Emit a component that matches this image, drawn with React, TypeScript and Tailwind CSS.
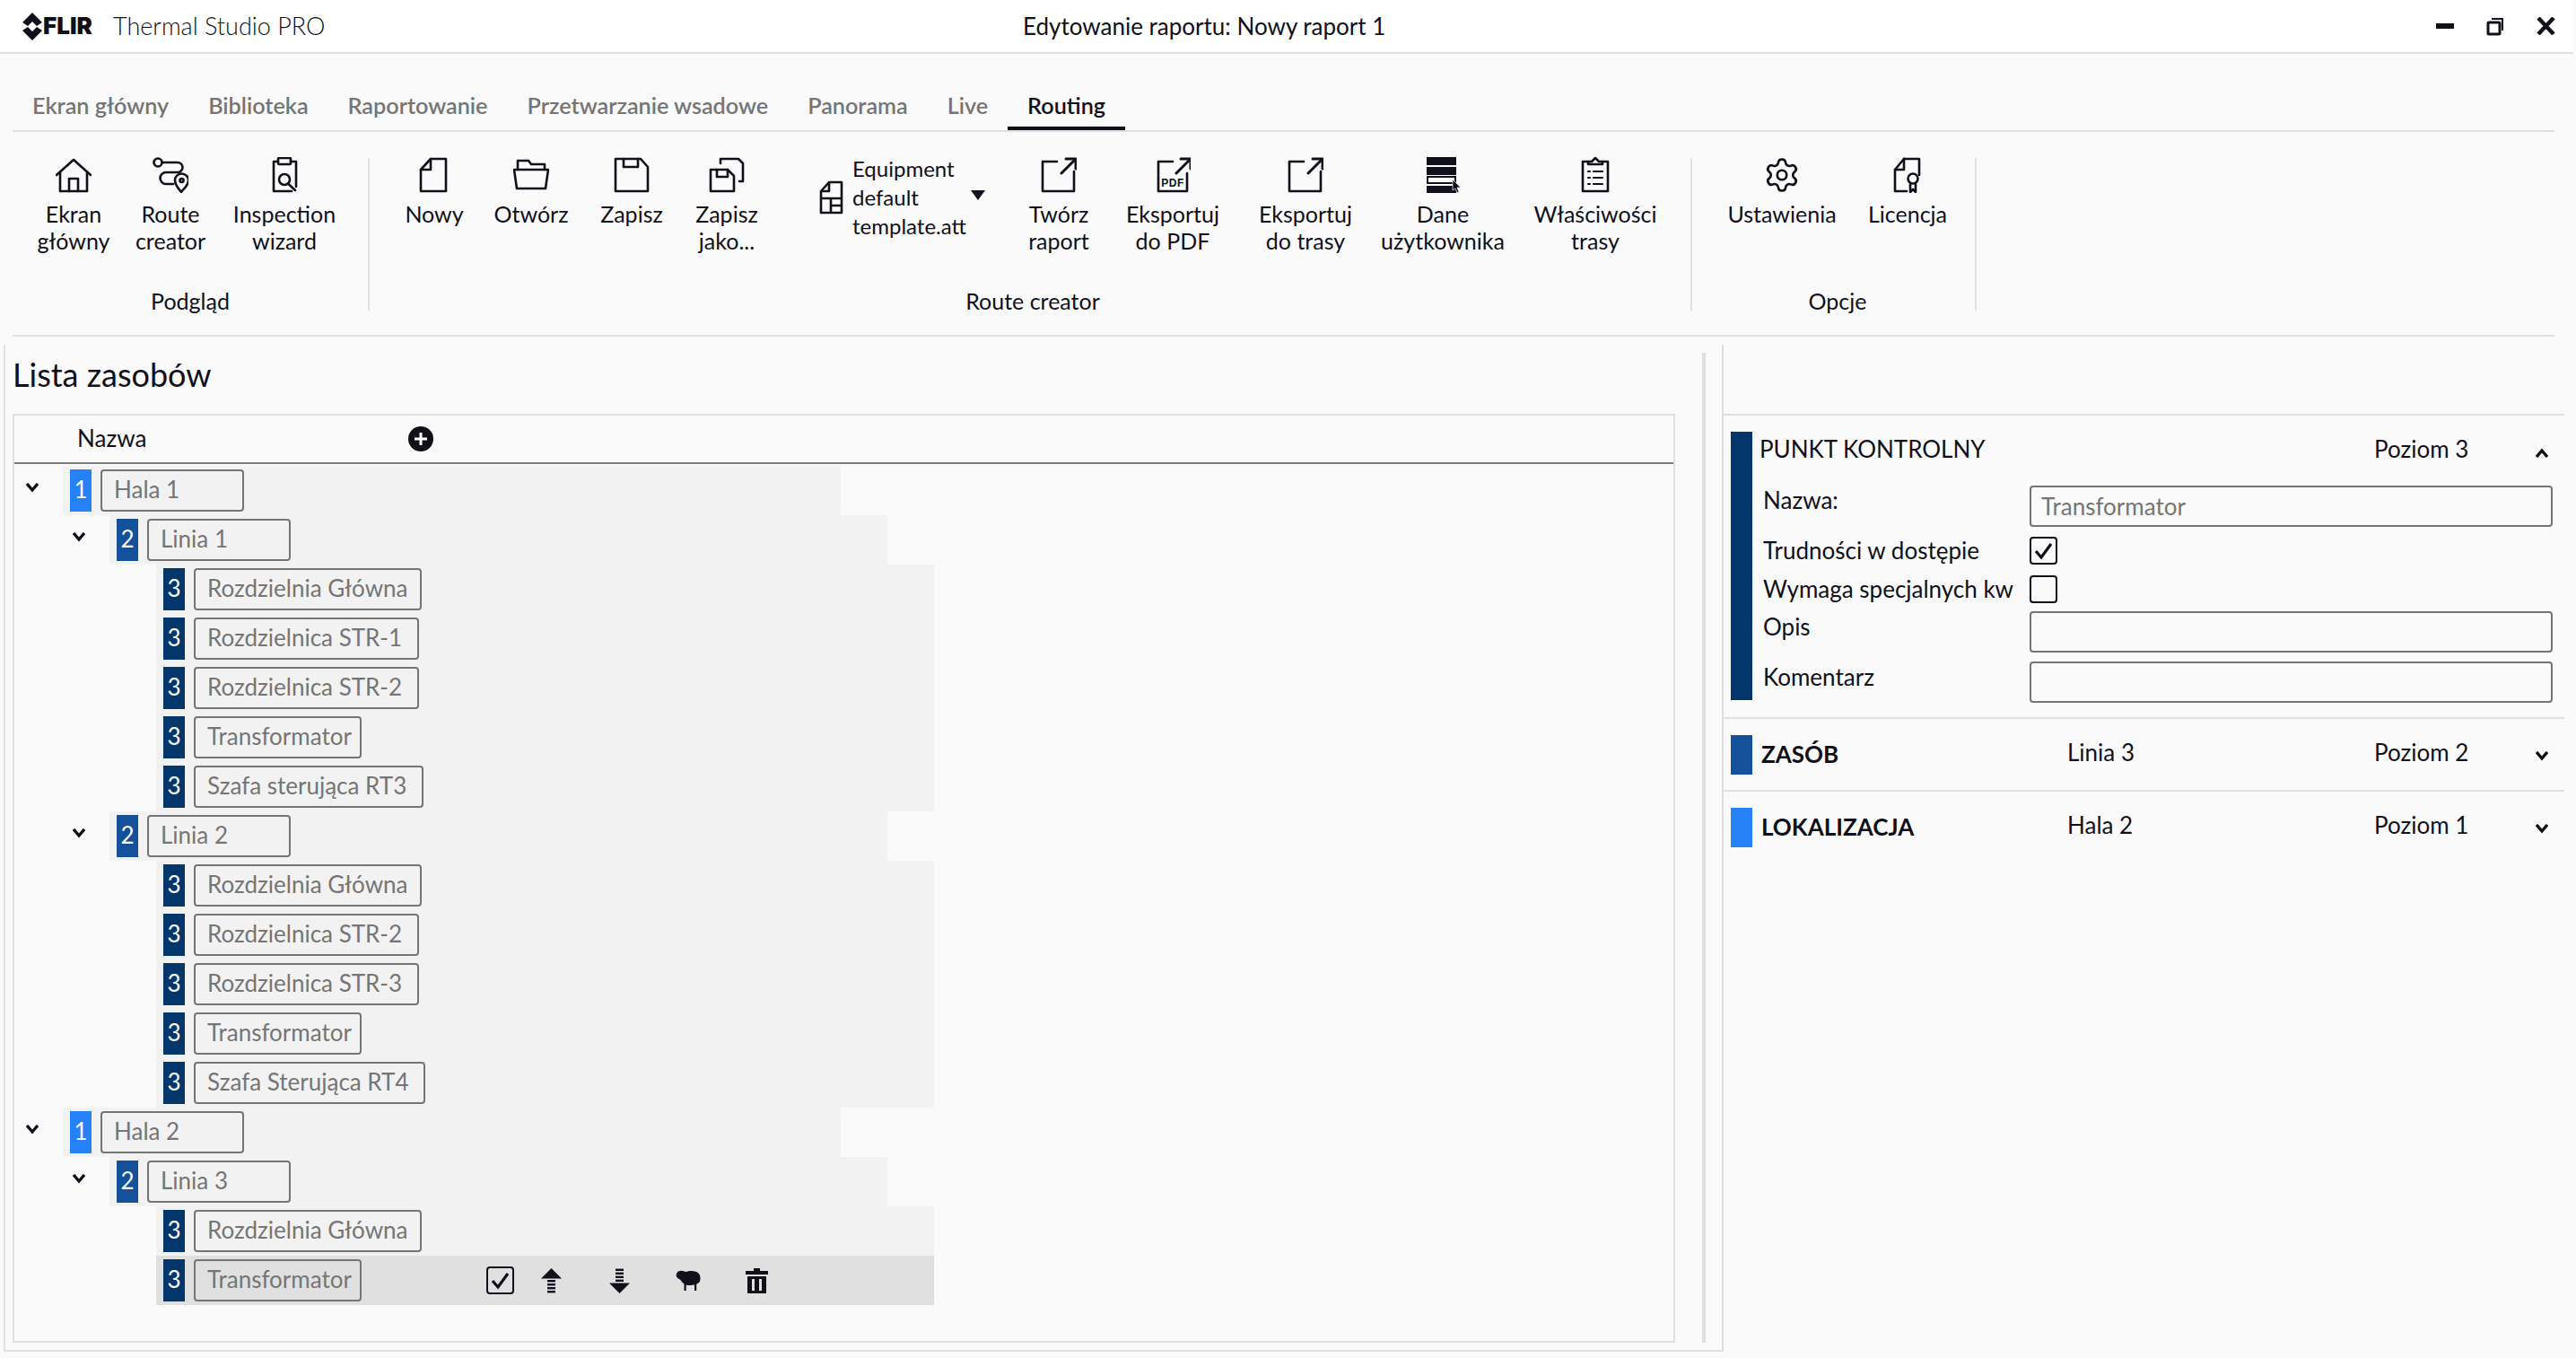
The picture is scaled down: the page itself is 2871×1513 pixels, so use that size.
import React from 'react';
import { Settings } from 'lucide-react';

const ink = '#10101a';

const Ico: React.FC<{ children: React.ReactNode }> = ({ children }) => (
  <svg width="40" height="40" viewBox="0 0 40 40" fill="none" stroke={ink} strokeWidth="2.6" strokeLinejoin="round" strokeLinecap="round" className="shrink-0">
    {children}
  </svg>
);

const HomeIcon = () => (
  <Ico>
    <path d="M1 20 L20 3 L39 20" />
    <path d="M5 17 V38 H35 V17" />
    <path d="M15 38 V24 H25 V38" />
  </Ico>
);

const RouteIcon = () => (
  <Ico>
    <circle cx="6" cy="6" r="4.5" />
    <path d="M11 6 H28 A5.5 5.5 0 0 1 28 17 H15 A6.5 6.5 0 0 0 15 30 H23" />
    <path d="M32 39 C28 34 25 31 25 26 A7.5 7.5 0 0 1 40 26 C40 31 36 34 32 39 Z" />
    <circle cx="32.5" cy="26" r="2" />
  </Ico>
);

const InspectIcon = () => (
  <Ico>
    <path d="M13 5 H8 V38 H28" />
    <path d="M27 5 H33 V33" />
    <rect x="13" y="1" width="14" height="7" rx="1" />
    <circle cx="20" cy="25" r="6" />
    <path d="M24.5 30 L32 37" />
  </Ico>
);

const NewIcon = () => (
  <Ico>
    <path d="M16 2 H33 V38 H5 V14 Z" />
    <path d="M16 2 V14 H5" />
  </Ico>
);

const OpenIcon = () => (
  <Ico>
    <path d="M5 14 V4 H17 L20 8 H35 V14" />
    <path d="M1 14 H39 L36 35 H4 Z" />
  </Ico>
);

const SaveIcon = () => (
  <Ico>
    <path d="M2 2 H30 L38 11 V38 H2 Z" />
    <path d="M11 2 V11 H27 V2" />
  </Ico>
);

const SaveAsIcon = () => (
  <Ico>
    <path d="M2 14 H21 L28 21 V38 H2 Z" />
    <path d="M9 14 V22 H21 V14" />
    <path d="M13 7 V2 H33 L38 7 V27 H34" />
  </Ico>
);

const TemplateIcon = () => (
  <svg width="27" height="38" viewBox="0 0 27 38" fill="none" stroke={ink} strokeWidth="2.6" strokeLinejoin="round" className="shrink-0">
    <path d="M11 2 H25 V36 H2 V12 Z" />
    <path d="M11 2 V12 H2" />
    <path d="M2 20 H25 M13 20 V36 M13 28 H25" />
  </svg>
);

const ExportIcon = () => (
  <Ico>
    <path d="M18 5 H2 V38 H37 V16" />
    <path d="M23 18 L38 3" strokeWidth="3" />
    <path d="M28 2 H39 V13" strokeWidth="3" />
  </Ico>
);

const ExportPdfIcon = () => (
  <Ico>
    <path d="M20 5 H4 V38 H36 V18" />
    <path d="M24 18 L39 3" strokeWidth="3" />
    <path d="M29 2 H40 V13" strokeWidth="3" />
    <text x="20" y="33" textAnchor="middle" fontFamily="Liberation Sans" fontWeight="700" fontSize="12" fill={ink} stroke="none" letterSpacing="0.5">PDF</text>
  </Ico>
);

const UserDataIcon = () => (
  <svg width="40" height="40" viewBox="0 0 40 40" className="shrink-0">
    <rect x="2" y="0" width="33" height="9" fill={ink} />
    <rect x="2" y="11" width="33" height="9" fill={ink} />
    <rect x="3" y="22" width="31" height="7" fill="none" stroke={ink} strokeWidth="2" />
    <rect x="2" y="32" width="33" height="8" fill={ink} />
    <path d="M31 25 L40 34 L36 34 L38 39 L36 40 L34 35 L31 37 Z" fill={ink} stroke="#fafafa" strokeWidth="0.7" />
  </svg>
);

const PropsIcon = () => (
  <Ico>
    <path d="M12 5 H6 V38 H34 V5 H28" />
    <path d="M12 8 V5 H16 L20 1 L24 5 H28 V8 Z" />
    <path d="M12 16 H14 M18 16 H28 M12 23 H14 M18 23 H28 M12 30 H14 M18 30 H28" strokeWidth="2.2" />
  </Ico>
);

const LicenseIcon = () => (
  <Ico>
    <path d="M16 2 H33 V20" />
    <path d="M16 2 L6 14 V38 H19" />
    <path d="M16 2 V14 H6" />
    <circle cx="26" cy="24" r="5.5" />
    <path d="M23 30 V39 L26 36 L29 39 V30" />
  </Ico>
);

const Chevron: React.FC<{ up?: boolean }> = ({ up }) => (
  <svg width="16" height="11" viewBox="0 0 16 11" fill="none" stroke={ink} strokeWidth="3.4" className="shrink-0">
    <path d={up ? 'M2 10 L8 3 L14 10' : 'M2 1 L8 8 L14 1'} />
  </svg>
);

const CheckBox: React.FC<{ checked?: boolean }> = ({ checked }) => (
  <div className="w-[31px] h-[31px] shrink-0 border-2 border-[#10101a] rounded-[4px] flex items-center justify-center">
    {checked && (
      <svg width="23" height="20" viewBox="0 0 23 20" fill="none" stroke={ink} strokeWidth="3.2">
        <path d="M3 10 L9 17 L20 2" />
      </svg>
    )}
  </div>
);

const FlirMark = () => (
  <svg width="22" height="31" viewBox="0 0 22 31" fill={ink} className="shrink-0">
    <path d="M11 0 L22 11 L16 15 L11 10 L6 15 L0 11 Z" />
    <path d="M11 31 L22 20 L16 16 L11 21 L6 16 L0 20 Z" />
  </svg>
);

const ArrowBars = () => (
  <>
    <rect x="7" y="13" width="9" height="2.4" />
    <rect x="7" y="17" width="9" height="2.4" />
    <rect x="7" y="21" width="9" height="2.4" />
    <rect x="7" y="25" width="9" height="2.4" />
  </>
);

const UpIcon = () => (
  <svg width="23" height="28" viewBox="0 0 23 28" fill={ink} className="shrink-0">
    <path d="M11.5 0 L23 11.5 H0 Z" />
    <ArrowBars />
  </svg>
);

const DownIcon = () => (
  <svg width="23" height="28" viewBox="0 0 23 28" fill={ink} className="shrink-0 rotate-180">
    <path d="M11.5 0 L23 11.5 H0 Z" />
    <ArrowBars />
  </svg>
);

const SheepIcon = () => (
  <svg width="28" height="23" viewBox="0 0 28 23" fill={ink} className="shrink-0">
    <path d="M5 1 C8 0 10 2 12 2 C16 0 24 1 26 4 C28 7 28 12 26 14 C23 17 14 18 10 16 C7 14 6 11 4 10 C1 9 0 6 1 4 C2 2 3 1 5 1 Z" />
    <rect x="9.5" y="14" width="2.2" height="9" />
    <rect x="21" y="14" width="2.2" height="9" />
  </svg>
);

const TrashIcon = () => (
  <svg width="25" height="28" viewBox="0 0 25 28" fill={ink} className="shrink-0">
    <rect x="9" y="0" width="7" height="4" />
    <rect x="0" y="3" width="25" height="4" />
    <path fillRule="evenodd" d="M2 9 H23 V28 H2 Z M7 12 V25 H10 V12 Z M15 12 V25 H18 V12 Z" />
  </svg>
);

type Item = { cls: string; icon: React.ReactNode; label: React.ReactNode };

const group1: Item[] = [
  { cls: 'ml-[23px] w-[90px]', icon: <HomeIcon />, label: <>Ekran<br />główny</> },
  { cls: 'ml-[23px] w-[80px]', icon: <RouteIcon />, label: <>Route<br />creator</> },
  { cls: 'ml-[27px] w-[120px]', icon: <InspectIcon />, label: <>Inspection<br />wizard</> },
];

const group2a: Item[] = [
  { cls: 'ml-[42px] w-[60px]', icon: <NewIcon />, label: 'Nowy' },
  { cls: 'ml-[38px] w-[80px]', icon: <OpenIcon />, label: 'Otwórz' },
  { cls: 'ml-[37px] w-[70px]', icon: <SaveIcon />, label: 'Zapisz' },
  { cls: 'ml-[36px] w-[70px]', icon: <SaveAsIcon />, label: <>Zapisz<br />jako...</> },
];

const group2b: Item[] = [
  { cls: 'ml-[40px] w-[80px]', icon: <ExportIcon />, label: <>Twórz<br />raport</> },
  { cls: 'ml-[32px] w-[110px]', icon: <ExportPdfIcon />, label: <>Eksportuj<br />do PDF</> },
  { cls: 'ml-[38px] w-[110px]', icon: <ExportIcon />, label: <>Eksportuj<br />do trasy</> },
  { cls: 'ml-[28px] w-[140px]', icon: <UserDataIcon />, label: <>Dane<br />użytkownika</> },
  { cls: 'ml-[25px] w-[150px]', icon: <PropsIcon />, label: <>Właściwości<br />trasy</> },
];

const group3: Item[] = [
  { cls: 'ml-[35px] w-[130px]', icon: <Settings size={42} strokeWidth={1.5} color={ink} />, label: 'Ustawienia' },
  { cls: 'ml-[30px] w-[90px]', icon: <LicenseIcon />, label: 'Licencja' },
];

const RibbonItem: React.FC<{ item: Item }> = ({ item }) => (
  <div className={`${item.cls} shrink-0 flex flex-col items-center`}>
    <div className="h-[40px] flex items-center justify-center">{item.icon}</div>
    <div className="mt-[8px] text-center whitespace-nowrap leading-[30px]">{item.label}</div>
  </div>
);

const tabs = ['Ekran główny', 'Biblioteka', 'Raportowanie', 'Przetwarzanie wsadowe', 'Panorama', 'Live', 'Routing'];

type Row = { level: 1 | 2 | 3; name: string; w: string; open?: boolean; active?: boolean };

const rows: Row[] = [
  { level: 1, name: 'Hala 1', w: 'w-[160px]', open: true },
  { level: 2, name: 'Linia 1', w: 'w-[160px]', open: true },
  { level: 3, name: 'Rozdzielnia Główna', w: 'w-[254px]' },
  { level: 3, name: 'Rozdzielnica STR-1', w: 'w-[251px]' },
  { level: 3, name: 'Rozdzielnica STR-2', w: 'w-[251px]' },
  { level: 3, name: 'Transformator', w: 'w-[187px]' },
  { level: 3, name: 'Szafa sterująca RT3', w: 'w-[256px]' },
  { level: 2, name: 'Linia 2', w: 'w-[160px]', open: true },
  { level: 3, name: 'Rozdzielnia Główna', w: 'w-[254px]' },
  { level: 3, name: 'Rozdzielnica STR-2', w: 'w-[251px]' },
  { level: 3, name: 'Rozdzielnica STR-3', w: 'w-[251px]' },
  { level: 3, name: 'Transformator', w: 'w-[187px]' },
  { level: 3, name: 'Szafa Sterująca RT4', w: 'w-[258px]' },
  { level: 1, name: 'Hala 2', w: 'w-[160px]', open: true },
  { level: 2, name: 'Linia 3', w: 'w-[160px]', open: true },
  { level: 3, name: 'Rozdzielnia Główna', w: 'w-[254px]' },
  { level: 3, name: 'Transformator', w: 'w-[187px]', active: true },
];

const indent = { 1: 'w-[54px]', 2: 'w-[106px]', 3: 'w-[158px]' };
const badge = { 1: 'bg-[#2581f6]', 2: 'bg-[#15509b]', 3: 'bg-[#03376b]' };

const TreeRow: React.FC<{ row: Row }> = ({ row }) => (
  <div className="flex h-[55px]">
    <div className={`${indent[row.level]} shrink-0 flex justify-end items-center`}>
      {row.open && (
        <div className="mr-[26px] -mt-[7px]">
          <Chevron />
        </div>
      )}
    </div>
    <div className={`w-[867px] shrink-0 flex items-center pl-[8px] ${row.active ? 'bg-[#e0e0e0]' : 'bg-[#f2f2f2]'}`}>
      <div className={`w-[24px] h-[47px] pb-[2px] shrink-0 flex items-center justify-center text-white ${badge[row.level]}`}>{row.level}</div>
      <div className={`${row.w} ml-[10px] h-[47px] pb-[2px] shrink-0 border-2 border-[#757575] rounded-[4px] pl-[13px] flex items-center text-[#757575] whitespace-nowrap`}>
        {row.name}
      </div>
      {row.active && (
        <div className="ml-[139px] flex items-center">
          <CheckBox checked />
          <div className="ml-[30px]"><UpIcon /></div>
          <div className="ml-[53px]"><DownIcon /></div>
          <div className="ml-[51px]"><SheepIcon /></div>
          <div className="ml-[50px]"><TrashIcon /></div>
        </div>
      )}
    </div>
  </div>
);

const Field: React.FC<{ value?: string }> = ({ value }) => (
  <div className="w-[583px] h-[46px] border-2 border-[#757575] rounded-[4px] pl-[11px] flex items-center text-[#757575]">{value}</div>
);

const Section: React.FC<{ color: string; title: string; value: string; level: string }> = ({ color, title, value, level }) => (
  <div className="h-[79px] flex items-center pl-[8px]">
    <div className={`w-[24px] h-[44px] ${color}`} />
    <div className="ml-[10px] w-[341px] font-bold">{title}</div>
    <div className="w-[342px] -mt-[4px]">{value}</div>
    <div className="w-[179px] -mt-[4px]">{level}</div>
    <div className="mt-[4px]"><Chevron /></div>
  </div>
);

export default function App() {
  return (
    <div className="w-[2871px] h-[1513px] overflow-hidden flex flex-col bg-[#fafafa] text-[#10101a] text-[26px] font-['Lato',sans-serif]">
      {/* Title bar */}
      <div className="w-[2868px] h-[60px] shrink-0 bg-white border-b-2 border-[#e0e0e0] flex items-center">
        <div className="w-[1140px] shrink-0 pl-[25px] flex items-center">
          <FlirMark />
          <span className="ml-[1px] w-[66px] font-['Inter',sans-serif] font-black text-[26px] leading-none">FLIR</span>
          <span className="ml-[12px] text-[27px] font-light whitespace-nowrap">Thermal Studio PRO</span>
        </div>
        <div className="whitespace-nowrap">Edytowanie raportu: Nowy raport 1</div>
        <div className="ml-auto flex items-center pr-[20px] gap-[36px]">
          <div className="w-[20px] h-[6px] bg-[#10101a]" />
          <svg width="20" height="21" viewBox="0 0 20 21" fill="none" stroke={ink} strokeWidth="3">
            <rect x="2" y="6" width="13" height="13" rx="1" />
            <path d="M6 2 H18 V15" strokeWidth="2" />
          </svg>
          <svg width="21" height="20" viewBox="0 0 21 20" fill="none" stroke={ink} strokeWidth="4.5">
            <path d="M2 1 L19 19 M19 1 L2 19" />
          </svg>
        </div>
      </div>

      {/* Tabs */}
      <div className="ml-[14px] w-[2833px] h-[87px] shrink-0 border-b-2 border-[#e0e0e0] flex items-end font-semibold text-[25.2px] text-[#757575]">
        {tabs.map((tab) => (
          <div
            key={tab}
            className={`h-[43px] px-[22px] whitespace-nowrap leading-[30px] ${tab === 'Routing' ? 'border-b-4 border-[#10101a] text-[#10101a]' : ''}`}
          >
            {tab}
          </div>
        ))}
      </div>

      {/* Ribbon */}
      <div className="ml-[14px] w-[2833px] h-[228px] shrink-0 pt-[29px] border-b-2 border-[#e0e0e0] flex items-start text-[25px]">
        <div className="w-[398px] h-[170px] shrink-0 border-r-2 border-[#e0e0e0] flex flex-col">
          <div className="flex-1 flex -mt-px">
            {group1.map((item, i) => <RibbonItem key={i} item={item} />)}
          </div>
          <div className="text-center leading-[22px]">Podgląd</div>
        </div>
        <div className="w-[1474px] h-[170px] shrink-0 border-r-2 border-[#e0e0e0] flex flex-col">
          <div className="flex-1 flex -mt-px">
            {group2a.map((item, i) => <RibbonItem key={i} item={item} />)}
            <div className="ml-[68px] w-[187px] h-[96px] -mt-[3px] shrink-0 flex items-center">
              <TemplateIcon />
              <div className="ml-[10px] w-[130px] leading-[32px] text-[24px] whitespace-nowrap">Equipment<br />default<br />template.att</div>
              <div className="ml-[2px] w-0 h-0 border-x-[8px] border-x-transparent border-t-[11px] border-t-[#10101a] -mt-[6px]" />
            </div>
            {group2b.map((item, i) => <RibbonItem key={i} item={item} />)}
          </div>
          <div className="text-center leading-[22px] pl-[6px]">Route creator</div>
        </div>
        <div className="w-[317px] h-[170px] shrink-0 border-r-2 border-[#e0e0e0] flex flex-col">
          <div className="flex-1 flex -mt-px">
            {group3.map((item, i) => <RibbonItem key={i} item={item} />)}
          </div>
          <div className="text-center leading-[22px] pl-[9px]">Opcje</div>
        </div>
      </div>

      {/* Content */}
      <div className="flex-1 flex items-start">
        <div className="ml-[4px] mt-[9px] w-[1917px] h-[1122px] shrink-0 border-x-2 border-b-2 border-[#e0e0e0] flex">
          <div className="ml-[8px] w-[1853px] shrink-0">
            <div className="h-[77px] text-[36px] leading-[66px]">Lista zasobów</div>
            <div className="h-[1035px] border-2 border-[#e0e0e0]">
              <div className="h-[54px] border-b-2 border-[#7a7a7a] flex items-center pl-[70px]">
                <span className="w-[369px] shrink-0 -mt-[2px]">Nazwa</span>
                <div className="w-[28px] h-[28px] rounded-full bg-[#10101a] flex items-center justify-center">
                  <svg width="16" height="16" viewBox="0 0 16 16" stroke="#fff" strokeWidth="3">
                    <path d="M8 1 V15 M1 8 H15" />
                  </svg>
                </div>
              </div>
              <div className="pt-[2px]">
                {rows.map((row, i) => <TreeRow key={i} row={row} />)}
              </div>
            </div>
          </div>
          <div className="ml-[30px] mt-[9px] w-[4px] h-[1103px] bg-[#e0e0e0]" />
        </div>

        {/* Detail panel */}
        <div className="mt-[86px] w-[937px] shrink-0 border-t-2 border-[#e0e0e0]">
          <div className="h-[338px] pl-[8px] flex items-start border-b-2 border-[#e0e0e0]">
            <div className="mt-[18px] w-[24px] h-[299px] shrink-0 bg-[#03376b]" />
            <div className="mt-[18px] flex-1">
              <div className="h-[38px] flex items-center pl-[8px]">
                <div className="w-[685px] whitespace-nowrap">PUNKT KONTROLNY</div>
                <div className="w-[179px]">Poziom 3</div>
                <div className="mt-[8px]"><Chevron up /></div>
              </div>
              <div className="mt-[22px] pl-[12px] flex items-start">
                <div className="w-[297px] leading-[33px]">Nazwa:</div>
                <Field value="Transformator" />
              </div>
              <div className="mt-[11px] pl-[12px] flex items-center">
                <div className="w-[297px] leading-[31px]">Trudności w dostępie</div>
                <CheckBox checked />
              </div>
              <div className="mt-[12px] pl-[12px] flex items-center">
                <div className="w-[297px] leading-[31px] whitespace-nowrap">Wymaga specjalnych kw</div>
                <CheckBox />
              </div>
              <div className="mt-[9px] pl-[12px] flex items-start">
                <div className="w-[297px] leading-[34px]">Opis</div>
                <Field />
              </div>
              <div className="mt-[10px] pl-[12px] flex items-start">
                <div className="w-[297px] leading-[34px]">Komentarz</div>
                <Field />
              </div>
            </div>
          </div>
          <div className="border-b-2 border-[#e0e0e0]">
            <Section color="bg-[#15509b]" title="ZASÓB" value="Linia 3" level="Poziom 2" />
          </div>
          <Section color="bg-[#2581f6]" title="LOKALIZACJA" value="Hala 2" level="Poziom 1" />
        </div>
      </div>
    </div>
  );
}
